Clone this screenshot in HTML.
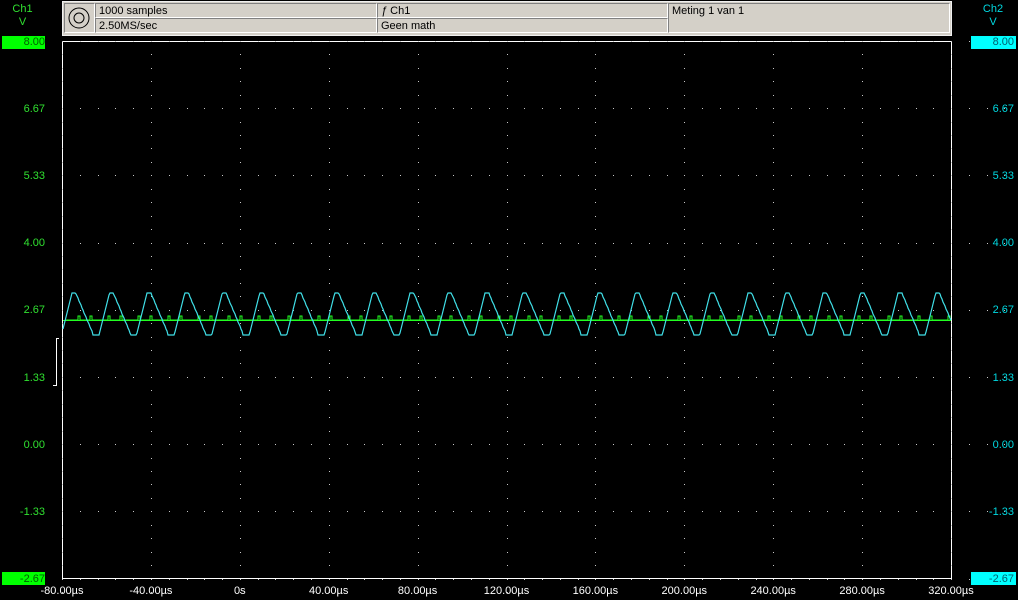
<!DOCTYPE html>
<html><head><style>
html,body{margin:0;width:1018px;height:600px;overflow:hidden}
body{background:#000;position:relative;font-family:"Liberation Sans",sans-serif;font-size:11px}
.a{position:absolute}
.hdr{left:62px;top:1px;width:888px;height:33px;background:#d4d0c8;border:1px solid #f0f0f0}
.c{position:absolute;background:#d4d0c8;border-left:1px solid #808080;border-top:1px solid #808080;border-right:1px solid #fff;border-bottom:1px solid #fff;color:#000;font-size:11px;padding-left:3px;line-height:14px;box-sizing:border-box}
.l{color:#30e030;width:45px;text-align:right;left:0;line-height:13px}
.r{color:#00d8e0;width:44px;text-align:right;left:970px;line-height:13px}
.b{color:#fff;width:80px;text-align:center;top:585px}
</style></head><body>
<div class="a hdr"></div>
<div class="c" style="left:64px;top:3px;width:31px;height:30px"><svg width="26" height="26" style="position:absolute;left:1px;top:1px"><circle cx="13" cy="13" r="10" fill="none" stroke="#000"/><circle cx="13" cy="13" r="5" fill="none" stroke="#000"/></svg></div>
<div class="c" style="left:95px;top:3px;width:282px;height:15px">1000 samples</div>
<div class="c" style="left:95px;top:18px;width:282px;height:15px">2.50MS/sec</div>
<div class="c" style="left:377px;top:3px;width:291px;height:15px"><i>ƒ</i> Ch1</div>
<div class="c" style="left:377px;top:18px;width:291px;height:15px">Geen math</div>
<div class="c" style="left:668px;top:3px;width:282px;height:30px">Meting 1 van 1</div>
<div class="a" style="left:0;top:3px;width:45px;text-align:center;color:#30e030;line-height:13px">Ch1<br>V</div>
<div class="a" style="left:970px;top:3px;width:46px;text-align:center;color:#00d8e0;line-height:13px">Ch2<br>V</div>
<svg class="a" style="left:0;top:0" width="1018" height="600" id="s">
<rect x="62.5" y="41.5" width="889" height="537" fill="none" stroke="#fff"/>
<line x1="56.5" y1="338" x2="56.5" y2="386" stroke="#fff"/>
<line x1="56" y1="338.5" x2="59" y2="338.5" stroke="#fff"/>
<line x1="53" y1="385.5" x2="57" y2="385.5" stroke="#fff"/>
<g id="g" fill="#c8c8c8"></g>
<line x1="63" y1="320.5" x2="951" y2="320.5" stroke="#22ff22"/>
<polyline id="gr" fill="none" stroke="#22ff22" points=""/>
<polyline id="cy" fill="none" stroke="#40e0e8" stroke-width="1.2" points=""/>
</svg>
<div class="a" style="left:2px;top:36px;width:43px;height:13px;background:#00ff00"></div>
<div class="a" style="left:2px;top:572px;width:43px;height:13px;background:#00ff00"></div>
<div class="a" style="left:971px;top:36px;width:45px;height:13px;background:#00ffff"></div>
<div class="a" style="left:971px;top:572px;width:45px;height:13px;background:#00ffff"></div>
<div id="lab"></div>
<script>
var g=document.getElementById('g'),h='';
for(var i=0;i<=10;i++){var x=62+i*88.9;for(var j=0;j<=8;j++){var y=41+j*67.2;
for(var k=1;k<5;k++){h+='<rect x="'+Math.round(x+k*17.8)+'" y="'+Math.round(y)+'" width="1" height="1"/>';h+='<rect x="'+Math.round(x)+'" y="'+Math.round(y+k*13.4)+'" width="1" height="1"/>';}
h+='<rect x="'+Math.round(x)+'" y="'+Math.round(y)+'" width="1" height="1"/>';}}
g.innerHTML=h;
var p=[],P=37.55;
for(var x=63;x<=951;x++){var t=((x-72)%P+P)%P/P,y;
if(t<0.1)y=293;else if(t<0.55)y=293+(t-0.1)/0.45*40;else if(t<0.72)y=335;else y=335-(t-0.72)/0.28*42;
p.push(x+','+Math.round(y));}
document.getElementById('cy').setAttribute('points',p.join(' '));
var q=[];for(var x=66;x<950;x+=6){q.push(x+',320');if((x*7)%5<2){q.push(x+',316');q.push((x+2)+',316');q.push((x+2)+',320');}}
document.getElementById('gr').setAttribute('points',q.join(' '));
var v=['8.00','6.67','5.33','4.00','2.67','1.33','0.00','-1.33','-2.67'],L='';
for(var j=0;j<9;j++){var y=36+j*67.1;var e=(j==0||j==8);
L+='<div class="a l" style="top:'+y+'px;'+(e?'color:#006000':'')+'">'+v[j]+'</div><div class="a r" style="top:'+y+'px;'+(e?'color:#006070':'')+'">'+v[j]+'</div>';}
var b=['-80.00µs','-40.00µs','0s','40.00µs','80.00µs','120.00µs','160.00µs','200.00µs','240.00µs','280.00µs','320.00µs'];
for(var i=0;i<11;i++)L+='<div class="a b" style="left:'+(62+i*88.9-40)+'px">'+b[i]+'</div>';
document.getElementById('lab').innerHTML=L;
</script>
</body></html>
